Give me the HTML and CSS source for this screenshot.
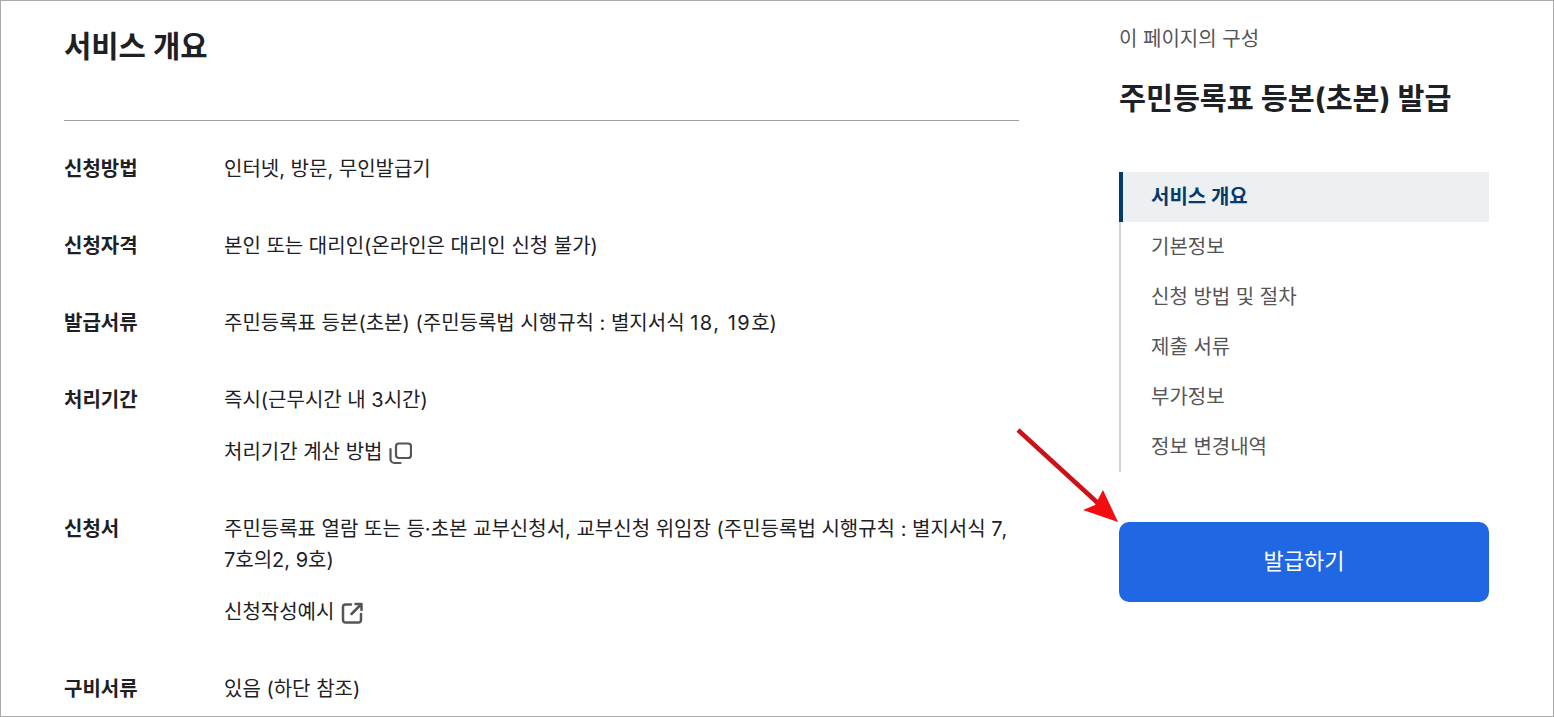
FILE: index.html
```html
<!DOCTYPE html>
<html lang="ko">
<head>
<meta charset="utf-8">
<title>주민등록표 등본(초본) 발급</title>
<link rel="stylesheet" href="styles.css">
</head>
<body>
<div class="page">
  <main class="main">
    <h2 class="title">서비스 개요</h2>
    <dl class="list">
      <div class="row"><dt>신청방법</dt><dd><p>인터넷, 방문, 무인발급기</p></dd></div>
      <div class="row"><dt>신청자격</dt><dd><p>본인 또는 대리인(온라인은 대리인 신청 불가)</p></dd></div>
      <div class="row"><dt>발급서류</dt><dd><p>주민등록표 등본(초본) (주민등록법 시행규칙 : 별지서식 <span class="digits">18, 19</span>호)</p></dd></div>
      <div class="row"><dt>처리기간</dt><dd><p>즉시(근무시간 내 3시간)</p><p class="link">처리기간 계산 방법
        <svg class="icon" viewBox="0 0 24 24" fill="none" stroke="#555" stroke-width="2.200" stroke-linecap="round" stroke-linejoin="round"><rect x="8" y="2.500" width="15" height="14.500" rx="3"/><path d="M2.500 8v10a4 4 0 0 0 4 4h6"/></svg></p></dd></div>
      <div class="row"><dt>신청서</dt><dd><p>주민등록표 열람 또는 등·초본 교부신청서, 교부신청 위임장 (주민등록법 시행규칙 : 별지서식 <span class="digits">7,</span> 7호의2, 9호)</p><p class="link">신청작성예시
        <svg class="icon" viewBox="0 0 24 24" fill="none" stroke="#555" stroke-width="2.500" stroke-linecap="round" stroke-linejoin="round"><path d="M11 3.500H5.500a2.500 2.500 0 0 0-2.500 2.500v13a2.500 2.500 0 0 0 2.500 2.500h13a2.500 2.500 0 0 0 2.500-2.500v-6"/><path d="M15.500 3h6v6M21 3.500 11.500 13"/></svg></p></dd></div>
      <div class="row"><dt>구비서류</dt><dd><p>있음 (하단 참조)</p></dd></div>
    </dl>
  </main>
  <aside class="side">
    <p class="eyebrow">이 페이지의 구성</p>
    <h1 class="side-title">주민등록표 등본(초본) 발급</h1>
    <ul class="toc">
      <li class="active">서비스 개요</li>
      <li>기본정보</li>
      <li>신청 방법 및 절차</li>
      <li>제출 서류</li>
      <li>부가정보</li>
      <li>정보 변경내역</li>
    </ul>
    <button class="cta" type="button">발급하기</button>
  </aside>
  <svg class="arrow" viewBox="0 0 120 100" width="120" height="100"><path d="M2 3 L84 78" stroke="#cc1218" stroke-width="4.500" fill="none"/><path d="M102 95 L67 83 L79 78 L87 63 Z" fill="#f40c12"/></svg>
</div>
</body>
</html>
```
FILE: styles.css
```css
* { box-sizing: border-box; }
html, body { margin: 0; padding: 0; height: 100%; overflow: hidden; background: #fff; }
body { font-family: Inter, "Noto Sans CJK KR", "Noto Sans", sans-serif; color: #1e2124; }
.page {
  position: relative;
  height: 717px;
  border: 1px solid #aaa;
  display: flex;
  padding-left: 63px;
  overflow: hidden;
}
.main { width: 955px; flex: none; }
.title {
  margin: 0;
  height: 120px;
  padding-top: 24px;
  border-bottom: 1px solid #a0a0a0;
  font-size: 29.700px;
  line-height: 42px;
  font-weight: 700;
}
.list { margin: 0; padding-top: 33px; }
.row { display: flex; margin-bottom: 46px; }
.row dt { width: 160px; flex: none; font-size: 20px; line-height: 31px; font-weight: 700; }
.row dd { margin: 0; flex: 1; font-size: 20px; line-height: 31px; }
.row dd p { margin: 0; }
.row dd p.link { margin-top: 21px; display: flex; align-items: center; gap: 6px; }
.digits { letter-spacing: 1.500px; }
.icon { width: 24px; height: 24px; flex: none; }
.side { width: 370px; flex: none; margin-left: 100px; }
.eyebrow { margin: 0; padding-top: 22px; font-size: 20px; line-height: 32px; color: #555; }
.side-title { margin: 22px 0 0; font-size: 29.300px; line-height: 44px; font-weight: 700; }
.toc { list-style: none; margin: 51px 0 0; padding: 0; border-left: 2px solid #cfd4d8; }
.toc li { height: 50px; line-height: 50px; padding-left: 30px; font-size: 20px; color: #555; }
.toc li.active { margin-left: -2px; padding-left: 28px; border-left: 4px solid #063a6b; background: #ecf0f3; color: #063a6b; font-weight: 700; }
.cta {
  display: block;
  width: 370px;
  height: 80px;
  margin-top: 50px;
  padding-bottom: 3px;
  border: 0;
  border-radius: 10px;
  background: #2067e4;
  color: #fff;
  font: 400 22px/1 Inter, "Noto Sans CJK KR", sans-serif;
}
.arrow { position: absolute; left: 1015px; top: 426px; }
```
